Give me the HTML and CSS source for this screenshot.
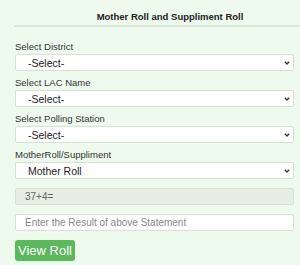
FILE: index.html
```html
<!DOCTYPE html>
<html lang="en">
<head>
    <meta charset="UTF-8">
    <meta name="viewport" content="width=device-width, initial-scale=1.0">
    <title>Mother Roll and Suppliment Roll</title>
    <link rel="stylesheet" href="styles.css">
</head>
<body>
    <!-- header -->
    <div class="panel-head">
        <h1>Mother Roll and Suppliment Roll</h1>
    </div>

    <!-- search form -->
    <form class="roll-form">
        <div class="field">
            <label for="district">Select District</label>
            <div class="select-wrap">
                <select id="district"><option>-Select-</option></select>
                <svg class="arrow" width="6" height="4" viewBox="0 0 6 4"><path d="M0.8 0.8 L3 3 L5.2 0.8" fill="none" stroke="#333" stroke-width="1.3"/></svg>
            </div>
        </div>
        <div class="field">
            <label for="lac">Select LAC Name</label>
            <div class="select-wrap">
                <select id="lac"><option>-Select-</option></select>
                <svg class="arrow" width="6" height="4" viewBox="0 0 6 4"><path d="M0.8 0.8 L3 3 L5.2 0.8" fill="none" stroke="#333" stroke-width="1.3"/></svg>
            </div>
        </div>
        <div class="field">
            <label for="station">Select Polling Station</label>
            <div class="select-wrap">
                <select id="station"><option>-Select-</option></select>
                <svg class="arrow" width="6" height="4" viewBox="0 0 6 4"><path d="M0.8 0.8 L3 3 L5.2 0.8" fill="none" stroke="#333" stroke-width="1.3"/></svg>
            </div>
        </div>
        <div class="field">
            <label for="rollType">MotherRoll/Suppliment</label>
            <div class="select-wrap">
                <select id="rollType"><option>Mother Roll</option><option>Suppliment</option></select>
                <svg class="arrow" width="6" height="4" viewBox="0 0 6 4"><path d="M0.8 0.8 L3 3 L5.2 0.8" fill="none" stroke="#333" stroke-width="1.3"/></svg>
            </div>
        </div>

        <input type="text" class="captcha" value="37+4=" disabled>
        <input type="text" class="answer" placeholder="Enter the Result of above Statement">

        <button type="button" class="view-btn">View Roll</button>
    </form>
</body>
</html>
```

FILE: styles.css
```css
/* page */
body {
    margin: 0;
    padding: 0;
    background: #effaee;
    font-family: 'Liberation Sans', Arial, sans-serif;
    color: #333333;
}

/* header */
.panel-head {
    margin-left: 14px;
    padding-left: 26px;
    height: 25px;
    border-bottom: 2px solid #dde6da;
    text-align: center;
}

.panel-head h1 {
    margin: 0;
    padding-top: 11px;
    font-size: 9.5px;
    line-height: 12px;
    font-weight: bold;
    color: #222222;
}

/* form */
.roll-form {
    padding: 14px 6px 0 15px;
}

.field {
    margin-bottom: 6px;
}

.field label {
    display: block;
    font-size: 9.5px;
    line-height: 12px;
    margin-bottom: 1px;
    color: #333333;
}

.select-wrap {
    position: relative;
}

.select-wrap select {
    display: block;
    width: 100%;
    height: 17px;
    padding: 0 14px 0 12px;
    border: 1px solid #d6e0d3;
    border-radius: 2px;
    background: #ffffff;
    font-family: 'Liberation Sans', Arial, sans-serif;
    font-size: 10.5px;
    color: #222222;
    appearance: none;
    -webkit-appearance: none;
}

.select-wrap .arrow {
    position: absolute;
    right: 4px;
    top: 7px;
    pointer-events: none;
}

.roll-form input {
    display: block;
    box-sizing: border-box;
    width: 100%;
    height: 17px;
    margin: 0 0 9px 0;
    padding: 0 9px;
    border: 1px solid #d6e0d3;
    border-radius: 2px;
    font-family: 'Liberation Sans', Arial, sans-serif;
    font-size: 10px;
}

.roll-form .captcha {
    margin-top: 9px;
    background: #e6eee3;
    color: #666666;
}

.roll-form .answer {
    background: #ffffff;
}

.roll-form .answer::placeholder {
    color: #888888;
}

/* button */
.view-btn {
    display: block;
    height: 21px;
    padding: 0 3px;
    border: none;
    border-radius: 3px;
    background: #5cb85c;
    color: #ffffff;
    font-family: 'Liberation Sans', Arial, sans-serif;
    font-size: 13px;
    cursor: pointer;
}
```
